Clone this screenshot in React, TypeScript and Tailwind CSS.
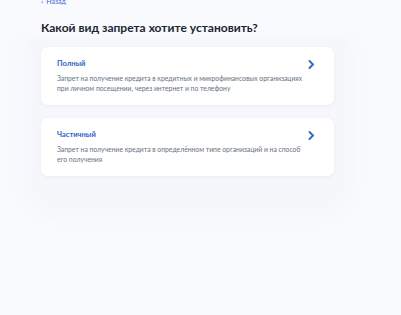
import React from 'react';

interface Option {
  id: number;
  title: string;
  text: string;
}

const options: Option[] = [
  {
    id: 1,
    title: 'Полный',
    text: 'Запрет на получение кредита в кредитных и микрофинансовых организациях при личном посещении, через интернет и по телефону',
  },
  {
    id: 2,
    title: 'Частичный',
    text: 'Запрет на получение кредита в определённом типе организаций и на способ его получения',
  },
];

const Chevron = () => (
  <svg width="7" height="9" viewBox="0 0 7 9" fill="none" className="shrink-0">
    <path d="M1.5 1L5 4.5L1.5 8" stroke="#2f62d9" strokeWidth="1.8" strokeLinecap="round" strokeLinejoin="round" />
  </svg>
);

export default function App() {
  return (
    <div
      className="w-[401px] h-[315px] overflow-hidden bg-[#f9fafd] text-[#0b1f33]"
      style={{ fontFamily: 'Lato, "Noto Sans", sans-serif' }}
    >
      <div className="pl-[41px] -mt-[4px]">
        {/* Back link */}
        <div className="flex items-center gap-[3px] text-[7px] leading-[10px] text-[#3b6be0]">
          <span className="text-[8px]">‹</span>
          <span>Назад</span>
        </div>

        {/* Heading */}
        <h1 className="mt-[14px] text-[12px] leading-[16px] font-bold text-[#1b2633]">
          Какой вид запрета хотите установить?
        </h1>
      </div>

      {/* Panel with cards */}
      <div className="ml-[27px] mt-[3px] w-[321px] rounded-b-[28px] bg-[#f5f7fb] shadow-[0_6px_14px_6px_#f5f7fb] px-[14px] pt-[8px] pb-[30px] flex flex-col gap-[13px]">
        {options.map((o) => (
          <div
            key={o.id}
            className="w-[293px] rounded-[7px] bg-white shadow-[0_1px_4px_rgba(30,60,120,0.06)] pl-[16px] pr-[19px] pt-[12px] pb-[12px]"
          >
            <div className="flex items-center justify-between">
              <span className="text-[7.5px] leading-[10px] font-bold text-[#2f62d9]">{o.title}</span>
              <Chevron />
            </div>
            <p className="mt-[4px] max-w-[252px] text-[6.8px] leading-[10px] text-[#66727f]">{o.text}</p>
          </div>
        ))}
      </div>
    </div>
  );
}
